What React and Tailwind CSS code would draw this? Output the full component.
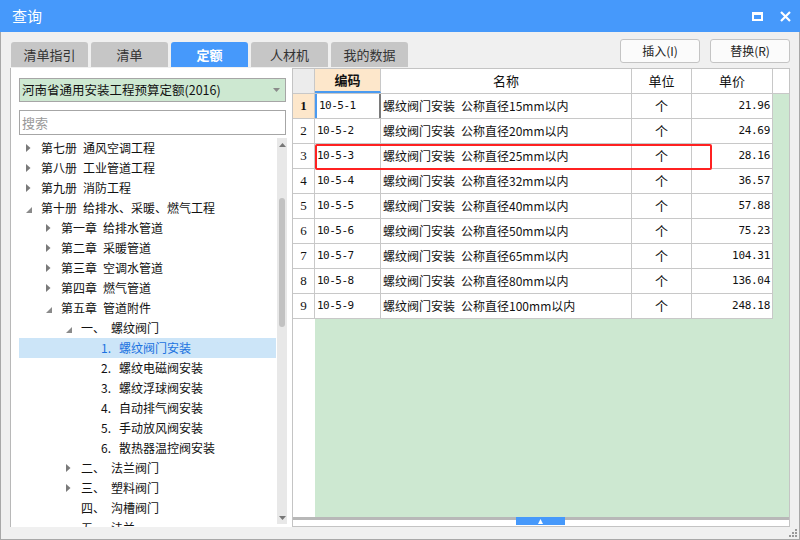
import React from "react";

const tree = [
  { l: 0, t: "c", a: "第七册", b: "通风空调工程" },
  { l: 0, t: "c", a: "第八册", b: "工业管道工程" },
  { l: 0, t: "c", a: "第九册", b: "消防工程" },
  { l: 0, t: "e", a: "第十册", b: "给排水、采暖、燃气工程" },
  { l: 1, t: "c", a: "第一章", b: "给排水管道" },
  { l: 1, t: "c", a: "第二章", b: "采暖管道" },
  { l: 1, t: "c", a: "第三章", b: "空调水管道" },
  { l: 1, t: "c", a: "第四章", b: "燃气管道" },
  { l: 1, t: "e", a: "第五章", b: "管道附件" },
  { l: 2, t: "e", a: "一、", b: "螺纹阀门" },
  { l: 3, t: "n", a: "1.", b: "螺纹阀门安装", sel: true },
  { l: 3, t: "n", a: "2.", b: "螺纹电磁阀安装" },
  { l: 3, t: "n", a: "3.", b: "螺纹浮球阀安装" },
  { l: 3, t: "n", a: "4.", b: "自动排气阀安装" },
  { l: 3, t: "n", a: "5.", b: "手动放风阀安装" },
  { l: 3, t: "n", a: "6.", b: "散热器温控阀安装" },
  { l: 2, t: "c", a: "二、", b: "法兰阀门" },
  { l: 2, t: "c", a: "三、", b: "塑料阀门" },
  { l: 2, t: "n", a: "四、", b: "沟槽阀门" },
  { l: 2, t: "n", a: "五、", b: "法兰" },
];

const pads = ["pl-[7px]", "pl-[27px]", "pl-[47px]", "pl-[67px]"];

const rows = [
  ["10-5-1", "15", "21.96"],
  ["10-5-2", "20", "24.69"],
  ["10-5-3", "25", "28.16"],
  ["10-5-4", "32", "36.57"],
  ["10-5-5", "40", "57.88"],
  ["10-5-6", "50", "75.23"],
  ["10-5-7", "65", "104.31"],
  ["10-5-8", "80", "136.04"],
  ["10-5-9", "100", "248.18"],
];

function Tri({ t }) {
  if (t === "c")
    return (
      <svg width="5" height="8" viewBox="0 0 5 8">
        <polygon points="0,0 4.5,4 0,8" fill="#7a7a7a" />
      </svg>
    );
  if (t === "e")
    return (
      <svg width="6" height="6" viewBox="0 0 6 6" className="mt-[3px]">
        <polygon points="6,0 6,6 0,6" fill="#8a8a8a" />
      </svg>
    );
  return null;
}

function Tab({ label, active }) {
  return (
    <div
      className={
        "w-[77px] h-[25px] rounded-t-[3px] flex items-center justify-center text-[13px] " +
        (active ? "bg-[#4699fb] text-white font-bold" : "bg-[#c6c6c6] text-[#333]")
      }
    >
      {label}
    </div>
  );
}

export default function App() {
  return (
    <div className="w-[800px] h-[540px] flex flex-col bg-[#f0f0f0] font-['Noto_Sans_CJK_SC','Noto_Sans',sans-serif] text-[12px] text-[#111] overflow-hidden">
      {/* title bar */}
      <div className="h-[32px] bg-[#4699fb] flex items-center justify-between pl-[12px] pr-[9px] shrink-0">
        <span className="text-white text-[15px]">查询</span>
        <div className="flex items-center gap-[17px]">
          <div className="w-[11px] h-[9px] border-2 border-white border-t-[3px]" />
          <svg width="11" height="11" viewBox="0 0 11 11">
            <path d="M1 1 L10 10 M10 1 L1 10" stroke="white" strokeWidth="2.2" />
          </svg>
        </div>
      </div>

      <div className="flex-1 flex flex-col border-x border-b border-[#a8a8a8]">
        {/* tabs + buttons */}
        <div className="h-[36px] flex items-start justify-between pl-[10px] pr-[9px] shrink-0">
          <div className="flex gap-[3px] mt-[10px]">
            <Tab label="清单指引" />
            <Tab label="清单" />
            <Tab label="定额" active />
            <Tab label="人材机" />
            <Tab label="我的数据" />
          </div>
          <div className="flex gap-[10px] mt-[7px]">
            <div className="w-[80px] h-[24px] bg-[#fbfbfb] border border-[#c4c4c4] rounded-[3px] flex items-center justify-center text-[12px] text-[#222]">
              插入(I)
            </div>
            <div className="w-[80px] h-[24px] bg-[#fbfbfb] border border-[#c4c4c4] rounded-[3px] flex items-center justify-center text-[12px] text-[#222]">
              替换(R)
            </div>
          </div>
        </div>

        {/* main */}
        <div className="flex pl-[9px] pr-[9px] h-[459px]">
          {/* left panel */}
          <div className="w-[282px] h-full bg-white border-l border-[#b8b8b8] flex flex-col pl-[8px] pr-[5px] pt-[10px] overflow-hidden">
            <div className="h-[24px] w-[267px] bg-[#cde8d1] border border-[#a6a6a6] flex items-center justify-between pl-[2px] pr-[5px] shrink-0">
              <span className="text-[12.5px]">河南省通用安装工程预算定额(2016)</span>
              <svg width="7" height="4" viewBox="0 0 7 4">
                <polygon points="0,0 7,0 3.5,4" fill="#8a8a8a" />
              </svg>
            </div>
            <div className="mt-[8px] h-[25px] w-[267px] bg-white border border-[#a6a6a6] flex items-center pl-[2px] text-[#999] text-[13px] shrink-0">
              搜索
            </div>
            <div className="flex mt-[3px] flex-1 min-h-0">
              <div className="w-[257px] flex flex-col overflow-hidden">
                {tree.map((r, i) => (
                  <div
                    key={i}
                    className={
                      "h-[20px] shrink-0 flex items-center " +
                      pads[r.l] +
                      (r.sel ? " bg-[#cce5f8] text-[#1b72e0]" : "")
                    }
                  >
                    <span className="w-[15px] shrink-0 flex items-center">
                      <Tri t={r.t} />
                    </span>
                    <span className={r.l === 3 ? "w-[18px] shrink-0" : r.l === 2 ? "w-[30px] shrink-0" : "w-[42px] shrink-0"}>
                      {r.a}
                    </span>
                    <span className="whitespace-nowrap">{r.b}</span>
                  </div>
                ))}
              </div>
              <div className="w-[10px] ml-[1px] bg-[#e8e8e8] flex flex-col items-center h-[386px] relative">
                <svg width="7" height="4" viewBox="0 0 7 4" className="mt-[5px]">
                  <polygon points="3.5,0 7,4 0,4" fill="#777" />
                </svg>
                <div className="w-[6px] h-[129px] bg-[#c2c2c2] rounded-[3px] mt-[51px]" />
                <svg width="7" height="4" viewBox="0 0 7 4" className="absolute bottom-[4px]">
                  <polygon points="0,0 7,0 3.5,4" fill="#777" />
                </svg>
              </div>
            </div>
          </div>

          {/* right panel */}
          <div className="flex-1 h-full border border-[#c4c4c4] bg-white flex flex-col">
            {/* header */}
            <div className="h-[25px] flex shrink-0 border-b border-[#c8c8c8]">
              <div className="w-[22px] bg-[#ececec] border-r border-[#c8c8c8]" />
              <div className="w-[66px] bg-[#fde7cb] border-r border-[#c8c8c8] flex items-center justify-center font-bold text-[13px] border-b-2 border-b-[#4a9af0]">
                编码
              </div>
              <div className="w-[251px] border-r border-[#c8c8c8] flex items-center justify-center text-[13px]">
                名称
              </div>
              <div className="w-[60px] border-r border-[#c8c8c8] flex items-center justify-center text-[13px]">
                单位
              </div>
              <div className="w-[81px] border-r border-[#c8c8c8] flex items-center justify-center text-[13px]">
                单价
              </div>
              <div className="flex-1" />
            </div>
            {/* body */}
            <div className="flex-1 flex min-h-0">
              <div className="w-[22px] bg-white flex flex-col">
                {rows.map((r, i) => (
                  <div
                    key={i}
                    className={
                      "h-[25px] shrink-0 border-r border-b border-[#c8c8c8] flex items-center justify-center font-['Liberation_Serif',serif] text-[13px] " +
                      (i === 0 ? "bg-[#fde7cb] font-bold" : "")
                    }
                  >
                    {i + 1}
                  </div>
                ))}
              </div>
              <div className="flex-1 bg-[#cde8d1] relative">
                {rows.map((r, i) => (
                  <div key={i} className="h-[25px] w-[458px] flex bg-white border-b border-[#c8c8c8]">
                    <div
                      className={
                        "w-[66px] border-r border-[#c8c8c8] flex items-center pl-[2px] font-['DejaVu_Sans_Mono',monospace] text-[11px] tracking-[-0.5px] " +
                        (i === 0 ? "border-l-2 border-l-[#4a9af0] border-r-2 border-r-[#7a7a7a] pl-[0px]" : "")
                      }
                    >
                      {r[0]}
                    </div>
                    <div className="w-[251px] border-r border-[#c8c8c8] flex items-center pl-[2px] whitespace-nowrap">
                      螺纹阀门安装<span className="ml-[6px]">公称直径{r[1]}mm以内</span>
                    </div>
                    <div className="w-[60px] border-r border-[#c8c8c8] flex items-center justify-center text-[13px]">
                      个
                    </div>
                    <div className="w-[81px] border-r border-[#c8c8c8] flex items-center justify-end pr-[2px] font-['DejaVu_Sans_Mono',monospace] text-[11px] tracking-[-0.3px]">
                      {r[2]}
                    </div>
                  </div>
                ))}
                <div className="absolute left-[0px] top-[50px] w-[397px] h-[26px] border-2 border-[#ff2121] rounded-[2px]" />
              </div>
            </div>
            {/* horizontal scrollbar */}
            <div className="h-[9px] shrink-0 relative bg-white">
              <div className="h-[3px] bg-[#b8b8b8]" />
              <div className="absolute left-[223px] top-0 w-[49px] h-[8px] bg-[#4699fb] flex items-center justify-center">
                <svg width="5" height="5" viewBox="0 0 5 5">
                  <polygon points="2.5,0 5,5 0,5" fill="white" />
                </svg>
              </div>
            </div>
          </div>
        </div>
        <div className="flex-1 flex justify-end items-end pr-[2px] pb-[2px]">
          <svg width="8" height="8" viewBox="0 0 8 8">
            <rect x="6" y="0" width="2" height="2" fill="#999" />
            <rect x="3" y="3" width="2" height="2" fill="#999" />
            <rect x="6" y="3" width="2" height="2" fill="#999" />
            <rect x="0" y="6" width="2" height="2" fill="#999" />
            <rect x="3" y="6" width="2" height="2" fill="#999" />
            <rect x="6" y="6" width="2" height="2" fill="#999" />
          </svg>
        </div>
      </div>
    </div>
  );
}
